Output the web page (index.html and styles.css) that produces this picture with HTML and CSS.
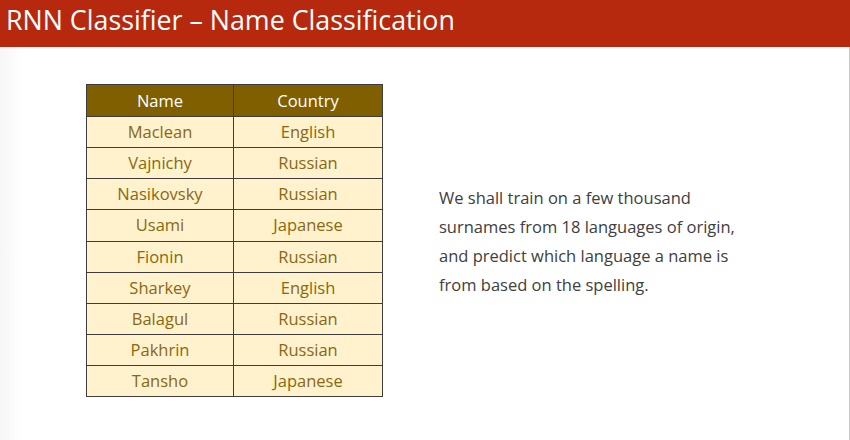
FILE: index.html
```html
<!DOCTYPE html>
<html>
<head>
<meta charset="utf-8">
<link rel="stylesheet" href="styles.css">
</head>
<body>
<header class="titlebar">RNN Classifier – Name Classification</header>
<main class="slide">
  <table class="names">
    <thead>
      <tr><th>Name</th><th>Country</th></tr>
    </thead>
    <tbody>
      <tr><td>Maclean</td><td>English</td></tr>
      <tr><td>Vajnichy</td><td>Russian</td></tr>
      <tr><td>Nasikovsky</td><td>Russian</td></tr>
      <tr><td>Usami</td><td>Japanese</td></tr>
      <tr><td>Fionin</td><td>Russian</td></tr>
      <tr><td>Sharkey</td><td>English</td></tr>
      <tr><td>Balagul</td><td>Russian</td></tr>
      <tr><td>Pakhrin</td><td>Russian</td></tr>
      <tr><td>Tansho</td><td>Japanese</td></tr>
    </tbody>
  </table>
  <p class="desc">We shall train on a few thousand surnames from 18 languages of origin, and predict which language a name is from based on the spelling.</p>
</main>
</body>
</html>
```
FILE: styles.css
```css
html, body {
  margin: 0;
  padding: 0;
  background: #ffffff;
}
body {
  width: 850px;
  height: 440px;
  overflow: hidden;
  font-family: "Open Sans", "Noto Sans", sans-serif;
}
.titlebar {
  height: 47px;
  background: #b7290f;
  color: #ffffff;
  font-size: 26.8px;
  line-height: 40px;
  padding-left: 6px;
  box-sizing: border-box;
  white-space: nowrap;
}
.slide {
  height: 393px;
  box-sizing: border-box;
  border-right: 1px solid #c8c8c8;
  background: linear-gradient(to right, #f6f6f6 0px, #ffffff 22px);
  display: flex;
  align-items: flex-start;
  padding-top: 37px;
  padding-left: 86px;
}
.names {
  border-collapse: collapse;
  font-size: 16.5px;
  flex: none;
}
.names th,
.names td {
  border: 1px solid #3d3d3d;
  text-align: center;
  padding: 0;
  height: 30.15px;
  line-height: 30px;
}
.names th {
  background: #7f5f00;
  color: #ffffff;
  font-weight: normal;
  height: 31px;
}
.names th:first-child,
.names td:first-child { width: 146px; }
.names th:last-child,
.names td:last-child { width: 148px; }
.names td {
  background: #fff2cc;
  color: #8b6711;
}
.desc {
  margin: 0;
  margin-left: 56px;
  margin-top: 99px;
  width: 305px;
  font-size: 16.5px;
  line-height: 29px;
  color: #404040;
}
```
